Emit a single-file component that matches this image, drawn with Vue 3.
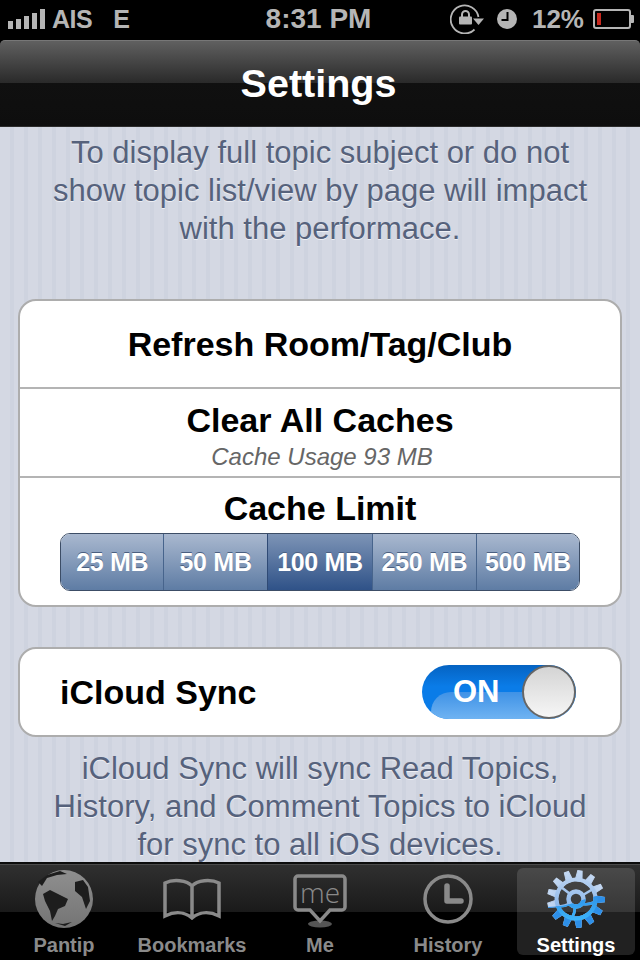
<script setup>
const sizes = [
  { label: '25 MB', active: false },
  { label: '50 MB', active: false },
  { label: '100 MB', active: true },
  { label: '250 MB', active: false },
  { label: '500 MB', active: false }
]
const teeth = Array.from({ length: 13 }, (_, i) => (i * 360) / 13 + 8)
</script>

<template>
  <div class="phone">
    <div class="status">
      <div class="status-left">
        <div class="signal">
          <i style="height: 8px"></i><i style="height: 10px"></i><i style="height: 13px"></i><i style="height: 16px"></i><i style="height: 20px"></i>
        </div>
        <span class="carrier">AIS</span>
        <span class="edge">E</span>
      </div>
      <span class="clock">8:31 PM</span>
      <div class="status-right">
        <svg width="36" height="30" viewBox="0 0 36 30">
          <path d="M24.5 25.5 A14 14 0 1 1 28.5 13" fill="none" stroke="#b5b5b5" stroke-width="1.8"/>
          <path d="M23 14.5 h11 l-5.5 6.5z" fill="#b5b5b5"/>
          <rect x="9" y="12.5" width="13" height="8" rx="1" fill="#b5b5b5"/>
          <path d="M12 13 v-2.5 a3.5 3.5 0 0 1 7 0 v2.5" fill="none" stroke="#b5b5b5" stroke-width="2"/>
        </svg>
        <svg class="alarm" width="20" height="20" viewBox="0 0 20 20">
          <circle cx="10" cy="10" r="10" fill="#b5b5b5"/>
          <path d="M10.5 3 v8 h-6" fill="none" stroke="#000" stroke-width="2"/>
        </svg>
        <span class="pct">12%</span>
        <svg width="42" height="20" viewBox="0 0 42 20">
          <rect x="1" y="1" width="36" height="18" rx="2" fill="none" stroke="#b5b5b5" stroke-width="2"/>
          <rect x="4" y="4" width="4" height="12" fill="#c8281e"/>
          <path d="M38 6 h2 a1 1 0 0 1 1 1 v6 a1 1 0 0 1 -1 1 h-2z" fill="#b5b5b5"/>
        </svg>
      </div>
    </div>

    <div class="navbar"><span>Settings</span></div>

    <main class="content">
      <p class="note top-note">To display full topic subject or do not<br>show topic list/view by page will impact<br>with the performace.</p>

      <section class="card">
        <div class="row refresh">Refresh Room/Tag/Club</div>
        <div class="row caches">
          <div class="row-title">Clear All Caches</div>
          <div class="row-sub">Cache Usage 93 MB</div>
        </div>
        <div class="row limit">
          <div class="row-title">Cache Limit</div>
          <div class="segments">
            <div v-for="s in sizes" :key="s.label" class="segment" :class="{ active: s.active }">{{ s.label }}</div>
          </div>
        </div>
      </section>

      <section class="card sync">
        <span class="sync-label">iCloud Sync</span>
        <div class="switch">
          <div class="switch-gloss"></div>
          <span class="switch-text">ON</span>
          <div class="knob"></div>
        </div>
      </section>

      <p class="note bottom-note">iCloud Sync will sync Read Topics,<br>History, and Comment Topics to iCloud<br>for sync to all iOS devices.</p>
    </main>

    <nav class="tabbar">
      <div class="tab">
        <div class="tab-icon">
          <svg width="58" height="58" viewBox="0 0 58 58">
            <defs>
              <linearGradient id="grey" x1="0" y1="0" x2="0" y2="1">
                <stop offset="0" stop-color="#8f8f8f"/>
                <stop offset="1" stop-color="#747474"/>
              </linearGradient>
            </defs>
            <circle cx="29" cy="29" r="29" fill="url(#grey)"/>
            <path d="M8 24 L15 20 L23 24 L33 29 L30 36 L23 39 L20 46 L17 51 L15 41 L10 31z" fill="#1d1d1d"/>
            <path d="M40 12 L48 10 L53 17 L55 31 L51 39 L47 27 L40 21z" fill="#1d1d1d"/>
            <path d="M3 12 L12 5 L25 1 L32 4 L22 5 L12 8 L7 16z" fill="#1d1d1d"/>
            <path d="M20 53 L30 56 L37 52 L28 54z" fill="#1d1d1d"/>
          </svg>
        </div>
        <span>Pantip</span>
      </div>
      <div class="tab">
        <div class="tab-icon">
          <svg width="58" height="42" viewBox="0 0 58 42">
            <path d="M29 8 C24 2 10 1 2 5 V38 C12 33 22 34 29 40 C36 34 46 33 56 38 V5 C48 1 34 2 29 8 Z M29 8 V40" fill="none" stroke="#8a8a8a" stroke-width="3.5"/>
          </svg>
        </div>
        <span>Bookmarks</span>
      </div>
      <div class="tab">
        <div class="tab-icon">
          <svg class="me-icon" width="54" height="54" viewBox="0 0 54 54">
            <ellipse cx="27" cy="50" rx="12" ry="3.5" fill="#555"/>
            <path d="M5 2 H49 a3 3 0 0 1 3 3 V33 a3 3 0 0 1 -3 3 H37 L27 47 L17 36 H5 a3 3 0 0 1 -3 -3 V5 a3 3 0 0 1 3 -3z" fill="none" stroke="#8a8a8a" stroke-width="3.5"/>
            <text x="27" y="29" text-anchor="middle" class="me-text">me</text>
          </svg>
        </div>
        <span>Me</span>
      </div>
      <div class="tab">
        <div class="tab-icon">
          <svg width="50" height="50" viewBox="0 0 50 50">
            <circle cx="25" cy="25" r="23" fill="none" stroke="#8a8a8a" stroke-width="3.5"/>
            <path d="M24 12 V27 H38" fill="none" stroke="#8a8a8a" stroke-width="5.5" stroke-linecap="round" stroke-linejoin="round"/>
          </svg>
        </div>
        <span>History</span>
      </div>
      <div class="tab selected">
        <div class="tab-icon">
          <svg width="60" height="60" viewBox="0 0 60 60">
            <defs>
              <g id="gear">
                <polygon v-for="a in teeth" :key="a" points="26.5,12 27.8,1.5 32.2,1.5 33.5,12" :transform="`rotate(${a} 30 30)`"/>
                <circle cx="30" cy="30" r="19.5" fill="none" stroke-width="4"/>
                <circle cx="30" cy="30" r="7.5" fill="none" stroke-width="4.5"/>
                <g fill="none" stroke-width="2.6">
                  <path d="M24 25 Q19 21 15 18"/>
                  <path d="M37 26 Q42 23 47 20"/>
                  <path d="M23 35 Q17 38 12 37"/>
                  <path d="M37 35 Q43 36 49 33"/>
                  <path d="M29 38 Q29 44 26 49"/>
                </g>
              </g>
              <clipPath id="gear-low">
                <path d="M0 38 Q18 38 30 33 Q45 28 60 25 V60 H0z"/>
              </clipPath>
              <linearGradient id="gear-top" gradientUnits="userSpaceOnUse" x1="0" y1="0" x2="0" y2="40">
                <stop offset="0" stop-color="#c6d9f2"/>
                <stop offset="1" stop-color="#8ab6ea"/>
              </linearGradient>
              <linearGradient id="gear-bottom" gradientUnits="userSpaceOnUse" x1="0" y1="25" x2="0" y2="60">
                <stop offset="0" stop-color="#2d8fe8"/>
                <stop offset="1" stop-color="#42c2ff"/>
              </linearGradient>
            </defs>
            <use href="#gear" fill="url(#gear-top)" stroke="url(#gear-top)"/>
            <g clip-path="url(#gear-low)">
              <use href="#gear" fill="url(#gear-bottom)" stroke="url(#gear-bottom)"/>
            </g>
          </svg>
        </div>
        <span>Settings</span>
      </div>
    </nav>
  </div>
</template>

<style scoped>
.phone {
  width: 640px;
  height: 960px;
  display: flex;
  flex-direction: column;
  overflow: hidden;
  background: #000;
  font-family: "Liberation Sans", Arial, sans-serif;
}

.status {
  height: 40px;
  flex: none;
  box-sizing: border-box;
  display: grid;
  grid-template-columns: 1fr auto 1fr;
  align-items: center;
  padding: 0 5px 2px 8px;
  color: #b5b5b5;
  font-weight: bold;
  font-size: 27px;
}

.status-left {
  display: flex;
  align-items: center;
}

.signal {
  display: flex;
  align-items: flex-end;
  gap: 3px;
  height: 20px;
  margin-right: 7px;
}

.signal i {
  display: block;
  width: 5px;
  background: #b5b5b5;
}

.carrier {
  font-size: 25px;
  letter-spacing: -0.5px;
}

.edge {
  font-size: 25px;
  margin-left: 21px;
}

.clock {
  font-size: 28px;
  margin-right: 6px;
}

.status-right {
  display: flex;
  align-items: center;
  justify-content: flex-end;
}

.alarm {
  margin: 0 15px 0 11px;
}

.pct {
  font-size: 26px;
  margin-right: 9px;
}

.navbar {
  height: 87px;
  flex: none;
  display: flex;
  align-items: center;
  justify-content: center;
  border-radius: 5px 5px 0 0;
  border-top: 1px solid #777;
  border-bottom: 1px solid #2c2c2c;
  box-sizing: border-box;
  background: linear-gradient(#606060, #2a2a2a 49%, #101010 49%, #0e0e0e);
  color: #fff;
  font-size: 39.5px;
  font-weight: bold;
}

.navbar span {
  margin-right: 3px;
}

.content {
  flex: 1;
  min-height: 0;
  padding: 0 18px;
  background: repeating-linear-gradient(90deg, #d4d8e3 0, #d4d8e3 10px, #ced3df 10px, #ced3df 14px);
}

.note {
  margin: 0;
  text-align: center;
  color: #56627c;
  font-size: 31px;
  line-height: 38px;
  text-shadow: 0 1px 0 #eef0f5;
}

.top-note {
  margin-top: 7px;
}

.card {
  background: #fff;
  border: 2px solid #adadad;
  border-radius: 18px;
}

.top-note + .card {
  margin-top: 51px;
}

.row {
  text-align: center;
  color: #000;
  border-top: 2px solid #b4b4b4;
  box-sizing: border-box;
}

.row:first-child {
  border-top: none;
}

.refresh {
  height: 86px;
  line-height: 86px;
  font-size: 34px;
  font-weight: bold;
}

.caches {
  height: 89px;
  padding-top: 11px;
}

.row-title {
  font-size: 34px;
  font-weight: bold;
  line-height: 40px;
}

.row-sub {
  font-size: 24px;
  font-style: italic;
  color: #666;
  line-height: 28px;
  margin-top: 3px;
  padding-left: 4px;
}

.limit {
  height: 129px;
  padding: 10px 40px 0;
}

.segments {
  display: flex;
  height: 58px;
  box-sizing: border-box;
  margin-top: 5px;
  border: 1px solid #3c4d66;
  border-radius: 10px;
  overflow: hidden;
}

.segment {
  flex: 1;
  display: flex;
  align-items: center;
  justify-content: center;
  background: linear-gradient(#a9b8cf, #5e7ca4);
  color: #fff;
  font-size: 25px;
  font-weight: bold;
  letter-spacing: -0.3px;
  text-shadow: 0 -1px 0 #4a5f80;
  border-left: 1px solid #47648c;
}

.segment:first-child {
  border-left: none;
}

.segment.active {
  flex: 1.02;
  background: linear-gradient(#7d94b6, #2f5288);
  border-left-color: #2f4a75;
}

.sync {
  margin-top: 40px;
  height: 90px;
  box-sizing: border-box;
  display: flex;
  align-items: center;
  justify-content: space-between;
  padding: 0 44px 0 40px;
}

.sync-label {
  font-size: 34px;
  font-weight: bold;
  color: #000;
}

.switch {
  position: relative;
  width: 154px;
  height: 54px;
  border-radius: 27px;
  overflow: hidden;
  background: linear-gradient(#0563c2, #0a7ce8 40%);
}

.switch-gloss {
  position: absolute;
  left: 9px;
  right: 0;
  top: 27px;
  bottom: 0;
  border-top-left-radius: 20px;
  background: linear-gradient(#3f92e6, #6fb3f2);
}

.switch-text {
  position: absolute;
  left: 31px;
  top: 9px;
  color: #fff;
  font-size: 31px;
  line-height: 36px;
  font-weight: bold;
}

.knob {
  position: absolute;
  right: 0;
  top: 0;
  width: 54px;
  height: 54px;
  box-sizing: border-box;
  border-radius: 50%;
  border: 2px solid #666;
  background: linear-gradient(#d4d4d4, #f6f6f6);
}

.bottom-note {
  margin-top: 13px;
}

.tabbar {
  position: relative;
  height: 98px;
  flex: none;
  display: flex;
  padding: 4px 0 5px;
  box-sizing: border-box;
  border-top: 2px solid #0c0c0c;
  box-shadow: inset 0 1px 0 #4a4a4a;
  background: linear-gradient(#303030, #1a1a1a 50%, #000 50%);
}

.tab {
  flex: 1;
  margin: 0 5px;
  display: flex;
  flex-direction: column;
  align-items: center;
  border-radius: 6px;
}

.tab-icon {
  height: 62px;
  display: flex;
  align-items: center;
  justify-content: center;
}

.me-icon {
  margin-top: 3px;
}

.tab span {
  color: #8a8a8a;
  font-size: 20px;
  font-weight: bold;
  line-height: 20px;
  margin-top: 5px;
}

.tab.selected {
  background: rgba(255, 255, 255, 0.13);
}

.tab.selected span {
  color: #fff;
}

.me-text {
  font-family: "Open Sans", "Liberation Sans", sans-serif;
  font-weight: 300;
  font-size: 28px;
  fill: #8a8a8a;
}
</style>
